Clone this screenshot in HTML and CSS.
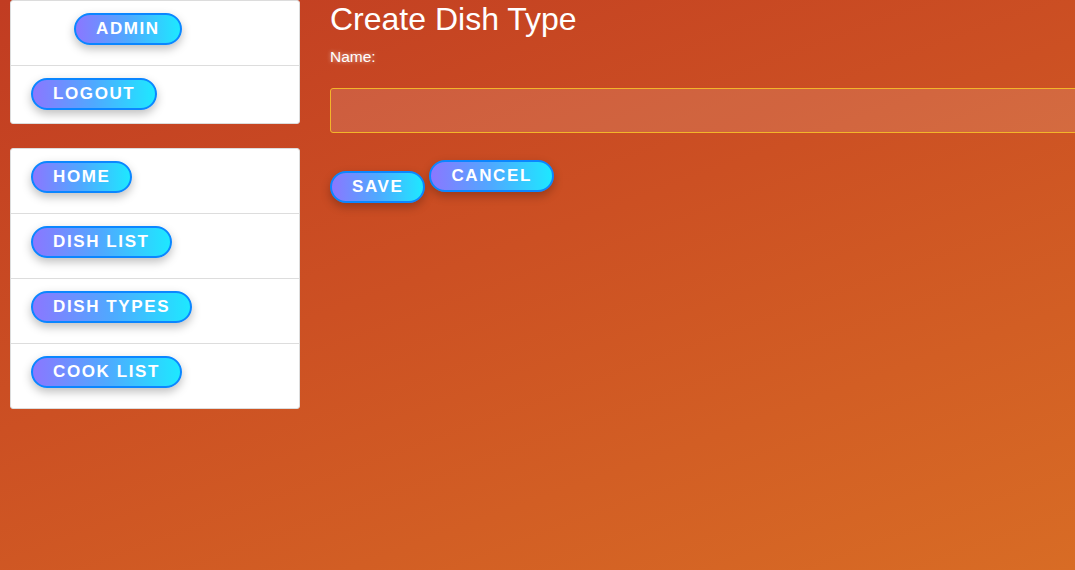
FILE: index.html
```html
<!DOCTYPE html>
<html>
<head>
<meta charset="utf-8">
<link rel="stylesheet" href="styles.css">
</head>
<body>
<div class="page">
  <aside class="sidebar">
    <ul class="card">
      <li class="row row-admin"><a class="pill pill-admin">Admin</a></li>
      <li class="row row-short"><a class="pill">Logout</a></li>
    </ul>
    <ul class="card">
      <li class="row"><a class="pill">Home</a></li>
      <li class="row"><a class="pill">Dish List</a></li>
      <li class="row"><a class="pill">Dish Types</a></li>
      <li class="row"><a class="pill">Cook List</a></li>
    </ul>
  </aside>
  <main class="main">
    <h1 class="title">Create Dish Type</h1>
    <label class="label">Name:</label>
    <div class="field"></div>
    <div class="actions">
      <a class="pill pill-save">Save</a>
      <a class="pill">Cancel</a>
    </div>
  </main>
</div>
</body>
</html>
```
FILE: styles.css
```css
html, body {
  margin: 0;
  padding: 0;
  height: 100%;
}
body {
  background: linear-gradient(160deg, #c13c22 0%, #cc5023 45%, #d86c25 100%);
  font-family: "Liberation Sans", Arial, sans-serif;
  overflow: hidden;
}
.page {
  display: flex;
  gap: 30px;
  padding-left: 10px;
}
.sidebar {
  width: 290px;
  display: flex;
  flex-direction: column;
  gap: 24px;
}
.card {
  list-style: none;
  margin: 0;
  padding: 0;
  background: #fff;
  border: 1px solid #dcdcdc;
  border-radius: 3px;
}
.row {
  height: 65px;
  box-sizing: border-box;
  padding: 12px 20px 0;
  border-top: 1px solid #dddddd;
}
.row:first-child {
  border-top: none;
  height: 64px;
  padding-top: 12px;
}
.row-admin {
  padding-left: 63px;
}
.row.row-short {
  height: 58px;
  padding-top: 12px;
}
.pill {
  display: inline-block;
  box-sizing: border-box;
  height: 32px;
  line-height: 28px;
  padding: 0 20px;
  border: 2px solid #0b86ff;
  border-radius: 16px;
  background: linear-gradient(90deg, #8b77ff 0%, #4fa9ff 50%, #1ee8ff 100%);
  color: #fff;
  font-family: "Liberation Sans", Arial, sans-serif;
  font-weight: bold;
  font-size: 17px;
  letter-spacing: 1.6px;
  text-transform: uppercase;
  box-shadow: 0 4px 10px rgba(0, 0, 0, 0.25);
  white-space: nowrap;
}
.main {
  flex: 1;
  min-width: 0;
  color: #fff;
}
.title {
  margin: 0;
  font-size: 32px;
  font-weight: normal;
  line-height: 38px;
}
.label {
  display: block;
  font-size: 15.5px;
  line-height: 18px;
  margin-top: 10px;
  text-shadow: 0 0 4px rgba(255, 255, 255, 0.6);
}
.field {
  margin-top: 22px;
  height: 45px;
  box-sizing: border-box;
  border: 1px solid #f3b52a;
  border-radius: 3px;
  background: rgba(255, 255, 255, 0.13);
  margin-right: -10px;
}
.actions {
  display: flex;
  align-items: flex-start;
  gap: 4px;
  margin-top: 27px;
}
.pill-save {
  margin-top: 11px;
}
```
